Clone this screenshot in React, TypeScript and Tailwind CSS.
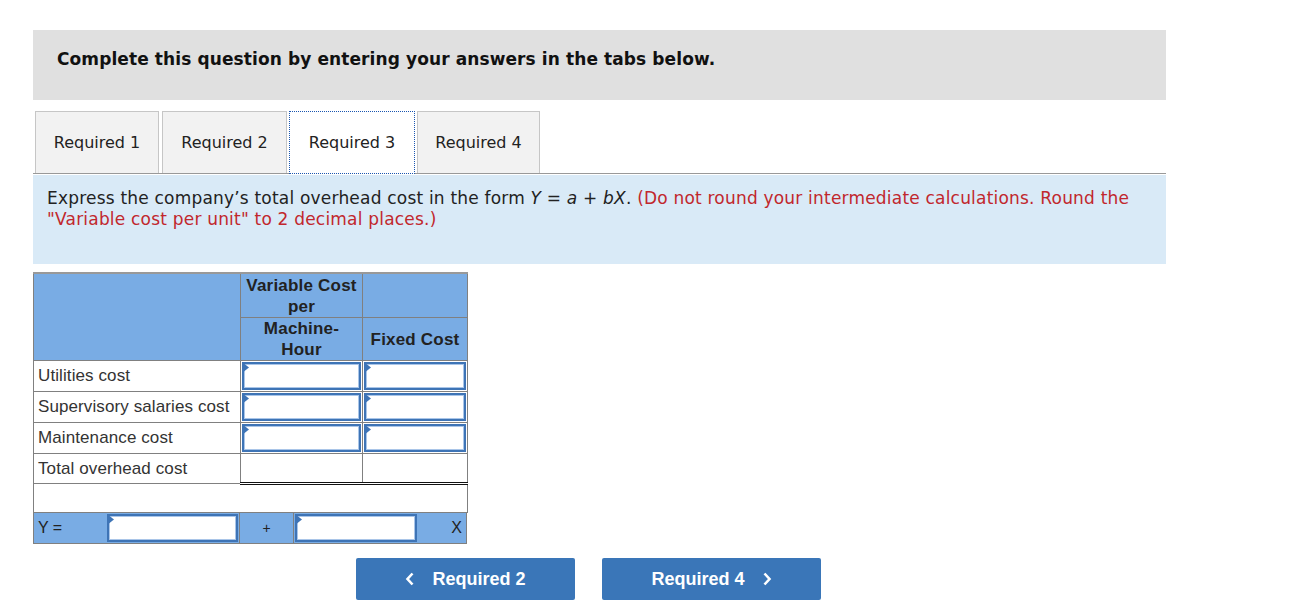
import { ReactNode } from 'react';

const verdana = { fontFamily: '"DejaVu Sans", Verdana, sans-serif' };
const arial = { fontFamily: '"Liberation Sans", Arial, sans-serif' };

function Tab({ label, width, active }: { label: string; width: string; active?: boolean }) {
  if (active) {
    return (
      <div className={`h-[63px] ${width} -mb-px flex items-center justify-center bg-white border border-dotted border-[#1a56b0] text-[16px] text-[#222]`}>
        {label}
      </div>
    );
  }
  return (
    <div className={`h-[62px] ${width} flex items-center justify-center bg-[#f2f2f2] border border-b-0 border-[#c6c6c6] text-[16px] text-[#222]`}>
      {label}
    </div>
  );
}

// blue-bordered entry box with the little marker in the corner
function Entry() {
  return (
    <div className="relative h-full border-2 border-[#3e74b6] bg-white">
      <div className="absolute inset-0 border border-[#a9c5e8]" />
      <svg className="absolute -left-[2px] -top-[2px]" width="7" height="11" viewBox="0 0 7 11">
        <path d="M0 0 L7 5.5 L0 11 Z" fill="#3e74b6" />
      </svg>
    </div>
  );
}

function LabelCell({ children }: { children: ReactNode }) {
  return (
    <td className="border border-[#808080] pl-[4px] h-[30px] text-[17px] tracking-[0.1px] text-[#333] whitespace-nowrap">
      {children}
    </td>
  );
}

function InputCell() {
  return (
    <td className="border border-[#808080] p-0 h-[30px]">
      <div className="h-[30px] p-px">
        <Entry />
      </div>
    </td>
  );
}

export default function App() {
  return (
    <div className="min-h-screen bg-white pt-[30px] pl-[33px]" style={verdana}>
      <div className="w-[1133px]">
        <div className="h-[70px] bg-[#e0e0e0] pl-6 pt-[19px]">
          <p className="text-[17px] tracking-[0.1px] font-bold text-[#111] leading-[20px]">
            Complete this question by entering your answers in the tabs below.
          </p>
        </div>

        <div className="mt-[11px] flex items-end pl-[2px] border-b border-[#999]">
          <Tab label="Required 1" width="w-[124px]" />
          <div className="w-[3px]" />
          <Tab label="Required 2" width="w-[125px]" />
          <div className="w-[2px]" />
          <Tab label="Required 3" width="w-[126px]" active />
          <div className="w-[2px]" />
          <Tab label="Required 4" width="w-[123px]" />
        </div>

        <div className="mt-[1px] h-[89px] bg-[#d9eaf7] px-[14px] pt-[13px] text-[17px] tracking-[0.2px] leading-[21px] text-[#222]">
          Express the company’s total overhead cost in the form <i>Y</i> = <i>a</i> + <i>bX</i>.{' '}
          <span className="text-[#c1272d]">
            (Do not round your intermediate calculations. Round the "Variable cost per unit" to 2 decimal places.)
          </span>
        </div>

        <div className="mt-[8px] w-[434px]" style={arial}>
          <table className="border-collapse w-[434px] table-fixed">
            <colgroup>
              <col className="w-[207px]" />
              <col className="w-[122px]" />
              <col className="w-[105px]" />
            </colgroup>
            <tbody>
              <tr className="bg-[#79ace4] text-[17px] tracking-[0.2px] font-bold text-[#222] text-center leading-[21px]">
                <td rowSpan={2} className="border border-[#808080] border-t-2 border-t-[#999]" />
                <td className="border border-[#808080] border-t-2 border-t-[#999] h-[44px] pt-[1px] align-top">
                  Variable Cost
                  <br />
                  per
                </td>
                <td className="border border-[#808080] border-t-2 border-t-[#999]" />
              </tr>
              <tr className="bg-[#79ace4] text-[17px] tracking-[0.2px] font-bold text-[#222] text-center leading-[21px]">
                <td className="border border-[#808080] h-[43px]">
                  Machine-
                  <br />
                  Hour
                </td>
                <td className="border border-[#808080]">Fixed Cost</td>
              </tr>
              <tr>
                <LabelCell>Utilities cost</LabelCell>
                <InputCell />
                <InputCell />
              </tr>
              <tr>
                <LabelCell>Supervisory salaries cost</LabelCell>
                <InputCell />
                <InputCell />
              </tr>
              <tr>
                <LabelCell>Maintenance cost</LabelCell>
                <InputCell />
                <InputCell />
              </tr>
              <tr>
                <LabelCell>Total overhead cost</LabelCell>
                <td className="border border-[#808080] border-b-[3px] border-b-[#111] border-double h-[29px]" />
                <td className="border border-[#808080] border-b-[3px] border-b-[#111] border-double" />
              </tr>
              <tr>
                <td colSpan={3} className="border border-[#808080] h-[29px]" />
              </tr>
            </tbody>
          </table>

          <div className="flex h-[31px] border border-t-0 border-[#808080] bg-[#79ace4] text-[16px] text-[#222]">
            <div className="w-[72px] pl-[4px] flex items-center">Y =</div>
            <div className="w-[134px] p-px border-r border-[#808080]">
              <Entry />
            </div>
            <div className="w-[54px] flex items-center justify-center text-[14px] border-r border-[#808080]">+</div>
            <div className="w-[124px] p-px">
              <Entry />
            </div>
            <div className="flex-1 flex items-center justify-end pr-[4px]">X</div>
          </div>
        </div>

        <div className="mt-[14px] ml-[323px] flex gap-[27px]" style={arial}>
          <button className="w-[219px] h-[42px] rounded-[2px] bg-[#3a76b8] text-white text-[18px] font-bold flex items-center justify-center gap-[17px]">
            <svg width="10" height="14" viewBox="0 0 10 14">
              <path d="M7.5 1.5 L2.5 7 L7.5 12.5" stroke="white" strokeWidth="2.6" fill="none" />
            </svg>
            Required 2
          </button>
          <button className="w-[219px] h-[42px] rounded-[2px] bg-[#3a76b8] text-white text-[18px] font-bold flex items-center justify-center gap-[17px]">
            Required 4
            <svg width="10" height="14" viewBox="0 0 10 14">
              <path d="M2.5 1.5 L7.5 7 L2.5 12.5" stroke="white" strokeWidth="2.6" fill="none" />
            </svg>
          </button>
        </div>
      </div>
    </div>
  );
}
